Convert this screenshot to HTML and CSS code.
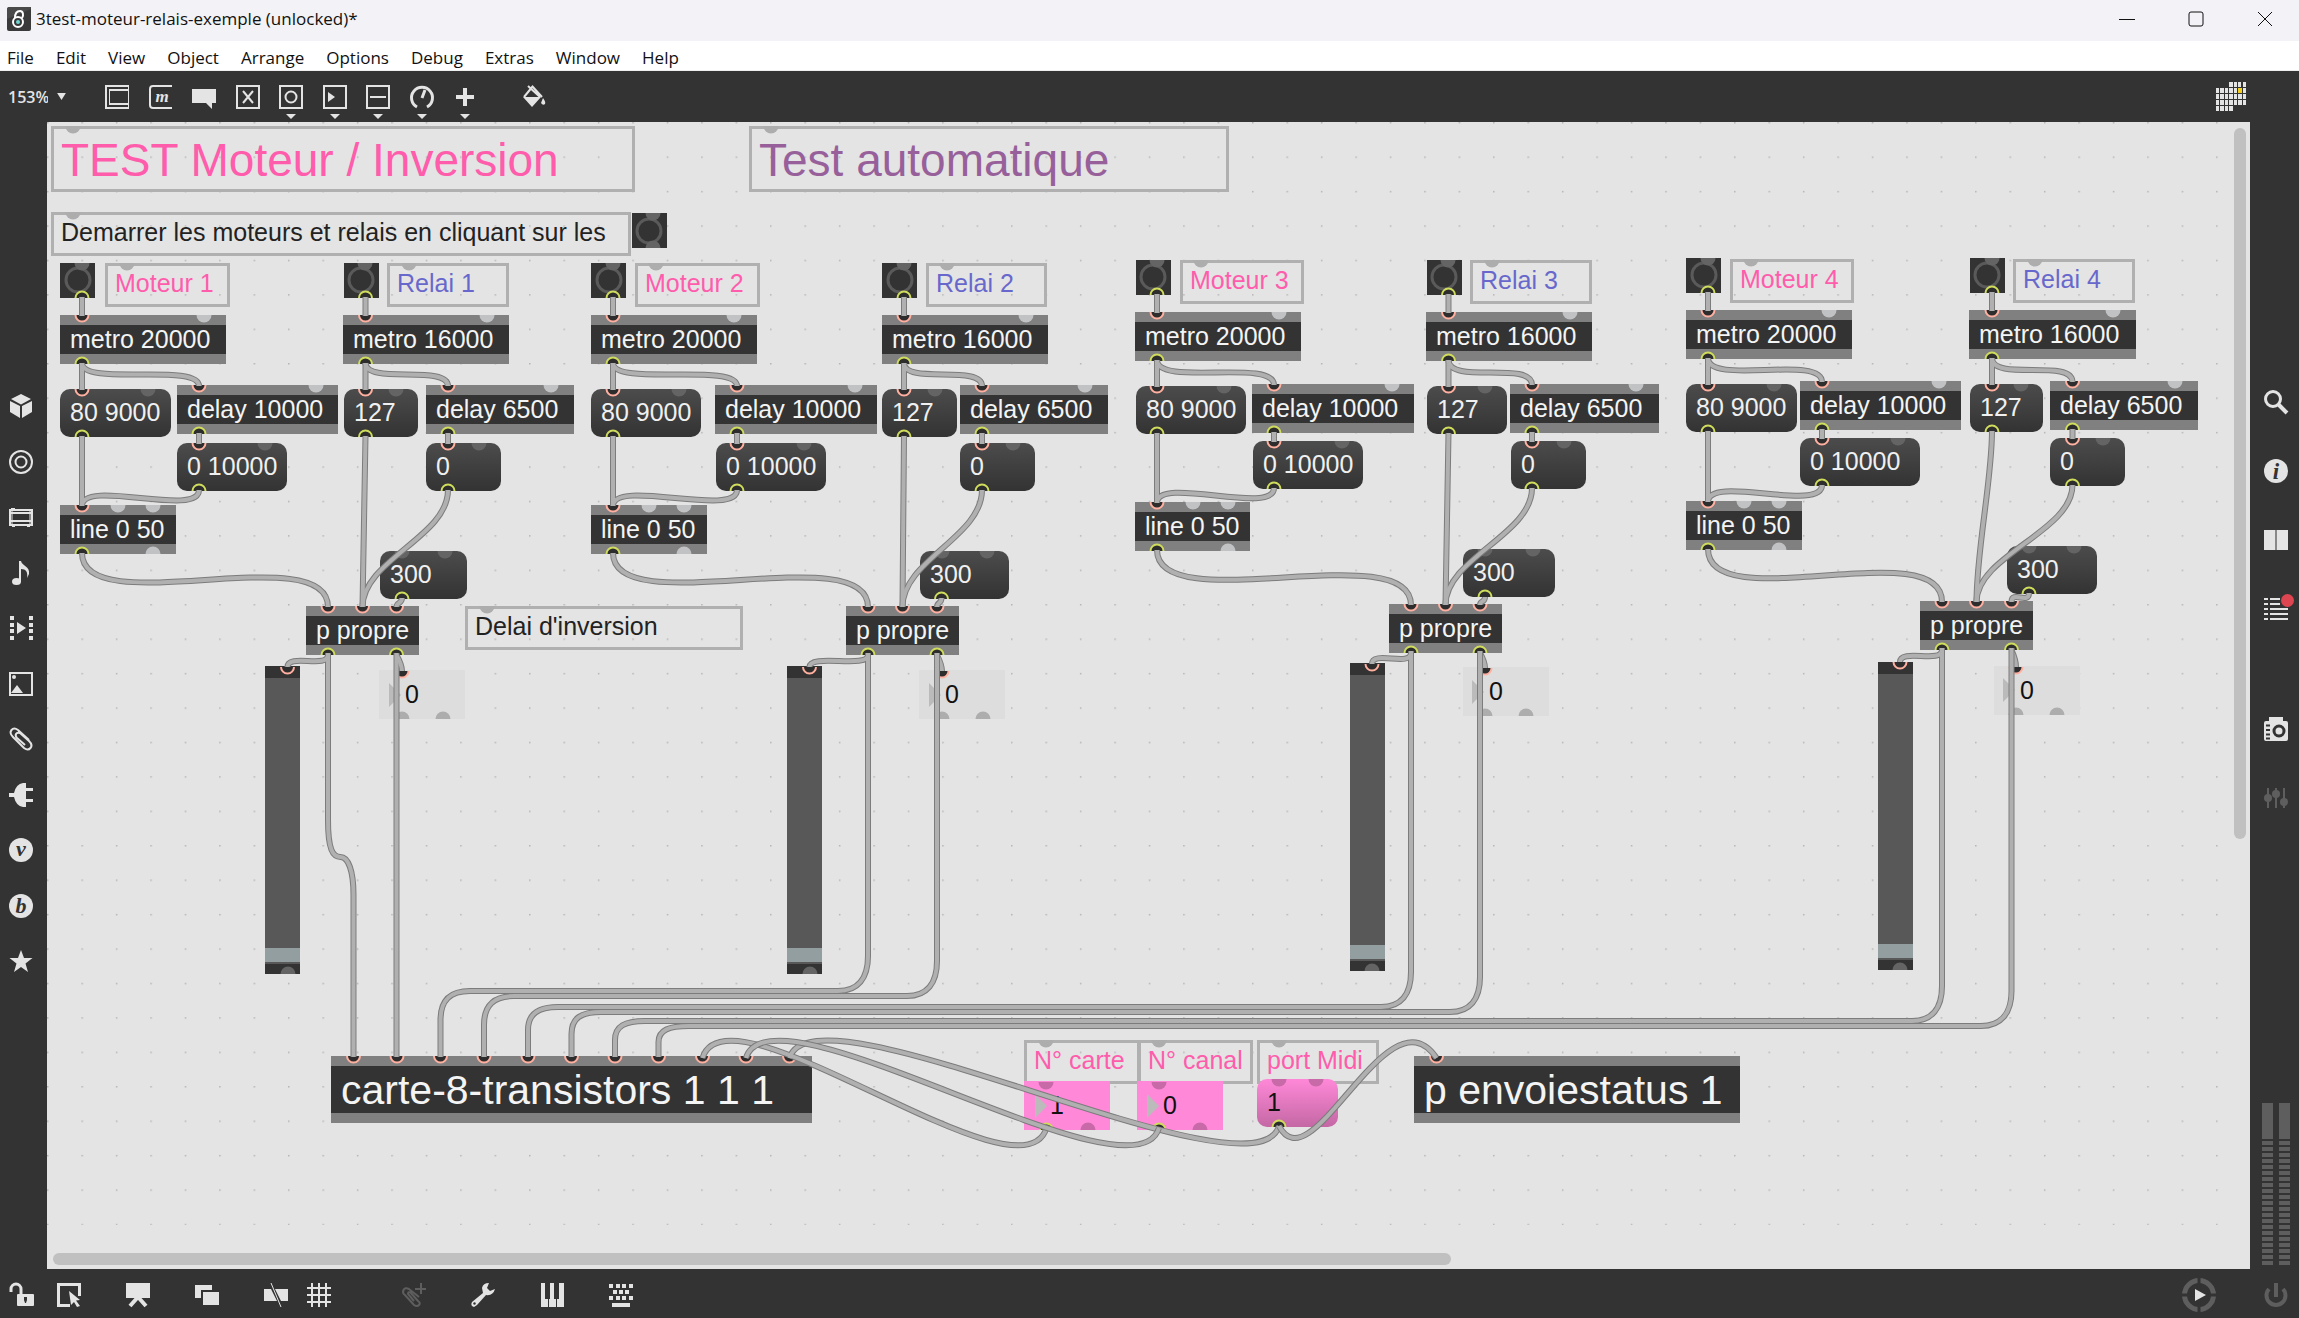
FILE: index.html
```html
<!DOCTYPE html>
<html lang="en">
<head>
<meta charset="utf-8">
<title>3test-moteur-relais-exemple (unlocked)*</title>
<link rel="stylesheet" href="styles.css">
</head>
<body>
<header class="titlebar">
  <svg class="app-icon" viewBox="0 0 24 24"><rect width="24" height="24" rx="2" fill="#3a3a3a"/><path d="M0 12L24 2V0H2L0 2Z" fill="#4a4a4a"/><circle cx="11" cy="15" r="5" fill="none" stroke="#fff" stroke-width="2"/><path d="M8 11C8 6 10 4 13 4S17 8 15 11" fill="none" stroke="#fff" stroke-width="2"/><circle cx="11" cy="15" r="2" fill="#6fd6d0"/></svg>
  <span class="title">3test-moteur-relais-exemple (unlocked)*</span>
  <div class="window-controls">
    <button aria-label="Minimize"><svg viewBox="0 0 16 16"><path d="M0 8.500H16"/></svg></button>
    <button aria-label="Maximize"><svg viewBox="0 0 16 16"><rect x="1" y="1" width="14" height="14" rx="2"/></svg></button>
    <button aria-label="Close"><svg viewBox="0 0 16 16"><path d="M1 1L15 15M15 1L1 15"/></svg></button>
  </div>
</header>
<nav class="menubar">
  <button>File</button><button>Edit</button><button>View</button><button>Object</button><button>Arrange</button><button>Options</button><button>Debug</button><button>Extras</button><button>Window</button><button>Help</button>
</nav>
<div class="toolbar">
  <div class="zoom">
    <select aria-label="Zoom"><option>153%</option></select>
    <svg viewBox="0 0 10 8"><path d="M0 0H10L5 8Z"/></svg>
  </div>
  <div class="tools">
    <button aria-label="Object"><svg class="ico" viewBox="0 0 24 24"><path class="ln" d="M1 0V24M0 1H24M4 5H24M4 19H24M0 23H24"/><path class="ln thin" d="M23.500 0V24M4.500 5V19"/></svg></button>
    <button aria-label="Message"><svg class="ico" viewBox="0 0 24 24"><path class="ln" d="M23 1H4Q1 1 1 4V20Q1 23 4 23H23"/><text class="glyph" x="13" y="17" font-size="17">m</text></svg></button>
    <button aria-label="Comment"><svg class="ico" viewBox="0 0 24 24"><path class="fl" d="M0 4H24V18H20V24L14 18H0Z"/></svg></button>
    <button aria-label="Toggle"><svg class="ico" viewBox="0 0 24 24"><path class="ln" d="M1 1H23V23H1ZM7 6L17 18M17 6L7 18"/></svg></button>
    <button class="drop" aria-label="Button"><svg class="ico" viewBox="0 0 24 24"><path class="ln" d="M1 1H23V23H1Z"/><circle class="ln" cx="12" cy="12" r="5.500"/></svg></button>
    <button class="drop" aria-label="Number"><svg class="ico" viewBox="0 0 24 24"><path class="ln" d="M1 1H23V23H1Z"/><path class="fl" d="M5 7L12 12L5 17Z"/></svg></button>
    <button class="drop" aria-label="Slider"><svg class="ico" viewBox="0 0 24 24"><path class="ln" d="M1 1H23V23H1ZM4 12H20"/></svg></button>
    <button class="drop" aria-label="Dial"><svg class="ico" viewBox="0 0 24 24"><path class="ln thick" d="M7 22A10.500 10.500 0 1 1 17 22M12 13L15 5"/></svg></button>
    <button class="drop" aria-label="Add"><svg class="ico" viewBox="0 0 24 24"><path class="ln fat" d="M12 3V21M3 12H21"/></svg></button>
  </div>
  <button class="format" aria-label="Format"><svg class="ico" viewBox="0 0 24 24"><path class="ln" d="M6 1L18 12M11 1L2 12M10 1L20 12"/><path class="fl" d="M1 12H19L10 22ZM21 13Q24 17 23 19Q21 21 19 18Z"/></svg></button>
  <button class="grid-btn" aria-label="Calendar"><svg viewBox="0 0 30 30"><path class="fl" d="M13 0h4v5h-4zM18 0h3v5h-3zM22 0h3v5h-3zM27 0h3v5h-3zM0 6h3v5h-3zM4 6h4v5h-4zM9 6h3v5h-3zM13 6h4v5h-4zM18 6h3v5h-3zM27 6h3v5h-3zM0 12h3v5h-3zM4 12h4v5h-4zM9 12h3v5h-3zM13 12h4v5h-4zM18 12h3v5h-3zM22 12h4v5h-4zM27 12h3v5h-3zM0 18h3v5h-3zM4 18h4v5h-4zM9 18h3v5h-3zM13 18h4v5h-4zM18 18h3v5h-3zM22 18h4v5h-4zM27 18h3v5h-3zM0 24h3v5h-3zM4 24h4v5h-4zM9 24h3v5h-3zM13 24h4v5h-4z"/><path d="M22 6h4v5h-4z" fill="#f2cf1d"/></svg></button>
</div>
<div class="workspace">
<aside class="rail left">
  <div class="stack">
    <button aria-label="Packages"><svg class="ico" viewBox="0 0 24 24"><path class="fl" d="M12 0L22 5L12 10.500L2 5ZM1 7L11 12V24L1 18ZM23 7L13 12V24L23 18Z"/></svg></button>
    <button aria-label="Target"><svg class="ico" viewBox="0 0 24 24"><circle class="ln" cx="12" cy="12" r="11"/><circle class="ln" cx="12" cy="12" r="5.500"/></svg></button>
    <button aria-label="Devices"><svg class="ico" viewBox="0 0 24 24"><path class="ln" d="M1 5H23V20H1ZM1 8H23M1 16H23"/><path class="ln thin" d="M3 5V20M21 5V20"/><path class="fl" d="M2 3h4v2h-4zM3 20h3v2h-3zM18 20h3v2h-3z"/></svg></button>
    <button aria-label="Audio"><svg class="ico" viewBox="0 0 24 24"><ellipse class="fl" cx="7.500" cy="20.500" rx="4.500" ry="3.500"/><path class="fl" d="M10 0H12C13 5 21 5 20 13L18 17C19 11 17 8 12 8V21H10Z"/></svg></button>
    <button aria-label="Video"><svg class="ico" viewBox="0 0 24 24"><path class="fl" d="M1 0h4v4h-4zM1 7h4v4h-4zM1 13h4v4h-4zM1 20h4v4h-4zM20 0h4v4h-4zM20 7h4v4h-4zM20 13h4v4h-4zM20 20h4v4h-4zM8 6L17 12L8 18Z"/></svg></button>
    <button aria-label="Images"><svg class="ico" viewBox="0 0 24 24"><path class="ln" d="M1 1H23V23H1Z"/><path class="fl" d="M2 21L8 13L14 21Z"/><circle class="fl" cx="5" cy="5" r="2"/></svg></button>
    <button aria-label="Snippets"><svg class="ico" viewBox="0 0 24 24"><path class="ln" d="M20 13L9 3Q5 0 2.500 3T4 10L15 21Q19 24 21.500 21T20 14L11 6Q8 5 7 7T8 11L16 18"/></svg></button>
    <button aria-label="Plug-ins"><svg class="ico" viewBox="0 0 24 24"><path class="fl" d="M0 10H5Q7 1 14 0H17V5H24V8H17V16H24V19H17V24H14Q7 23 5 14H0Z"/></svg></button>
    <button aria-label="Vizzie"><svg class="ico" viewBox="0 0 24 24"><circle class="fl" cx="12" cy="12" r="12"/><text class="glyph dark" x="12" y="18" font-size="22">v</text></svg></button>
    <button aria-label="Beap"><svg class="ico" viewBox="0 0 24 24"><circle class="fl" cx="12" cy="12" r="12"/><text class="glyph dark" x="12" y="19" font-size="22">b</text></svg></button>
    <button aria-label="Favorites"><svg class="ico" viewBox="0 0 24 24"><path class="fl" d="M12 1L15 9H23.500L16.500 14.500L19 23L12 18L5 23L7.500 14.500L.5 9H9Z"/></svg></button>
  </div>
</aside>

<main class="patch">
  <svg class="layer" aria-hidden="true">
    <defs><pattern id="dots" width="34.430" height="34.430" patternUnits="userSpaceOnUse"><rect width="1.500" height="1.500" fill="#b4b4b4"/></pattern></defs>
    <rect width="100%" height="1103" fill="url(#dots)"/>
  </svg>

  <h1 class="node comment big pink" style="--x:51;--y:126;--w:584">TEST Moteur / Inversion</h1>
  <h2 class="node comment big purple" style="--x:749;--y:126;--w:480">Test automatique</h2>
  <p class="node comment" style="--x:51;--y:212;--w:580">Demarrer les moteurs et relais en cliquant sur les</p>
  <button class="node bang" aria-label="bang" style="--x:632;--y:213"></button>

  <button class="node bang" aria-label="bang" style="--x:60;--y:263"></button>
  <p class="node comment pink" style="--x:105;--y:263;--w:125">Moteur 1</p>
  <div class="node object" style="--x:60;--y:315;--w:166">metro 20000</div>
  <button class="node message" style="--x:60;--y:389;--w:111">80 9000</button>
  <div class="node object" style="--x:177;--y:385;--w:161">delay 10000</div>
  <button class="node message" style="--x:177;--y:443;--w:110">0 10000</button>
  <div class="node object" style="--x:60;--y:505;--w:116">line 0 50</div>
  <button class="node bang" aria-label="bang" style="--x:344;--y:263"></button>
  <p class="node comment blue" style="--x:387;--y:263;--w:122">Relai 1</p>
  <div class="node object" style="--x:343;--y:315;--w:166">metro 16000</div>
  <button class="node message" style="--x:344;--y:389;--w:74">127</button>
  <div class="node object" style="--x:426;--y:385;--w:148">delay 6500</div>
  <button class="node message" style="--x:426;--y:443;--w:75">0</button>
  <button class="node message" style="--x:380;--y:551;--w:87">300</button>
  <div class="node object" style="--x:306;--y:606;--w:113">p propre</div>
  <p class="node comment" style="--x:465;--y:606;--w:278">Delai d'inversion</p>
  <input class="node slider" type="range" value="0" aria-label="Moteur 1" style="--x:265;--y:666">
  <input class="node number" type="text" value="0" aria-label="Relai 1" style="--x:379;--y:670">

  <button class="node bang" aria-label="bang" style="--x:591;--y:263"></button>
  <p class="node comment pink" style="--x:635;--y:263;--w:125">Moteur 2</p>
  <div class="node object" style="--x:591;--y:315;--w:166">metro 20000</div>
  <button class="node message" style="--x:591;--y:389;--w:110">80 9000</button>
  <div class="node object" style="--x:715;--y:385;--w:162">delay 10000</div>
  <button class="node message" style="--x:716;--y:443;--w:110">0 10000</button>
  <div class="node object" style="--x:591;--y:505;--w:116">line 0 50</div>
  <button class="node bang" aria-label="bang" style="--x:882;--y:263"></button>
  <p class="node comment blue" style="--x:926;--y:263;--w:121">Relai 2</p>
  <div class="node object" style="--x:882;--y:315;--w:166">metro 16000</div>
  <button class="node message" style="--x:882;--y:389;--w:75">127</button>
  <div class="node object" style="--x:960;--y:385;--w:148">delay 6500</div>
  <button class="node message" style="--x:960;--y:443;--w:75">0</button>
  <button class="node message" style="--x:920;--y:551;--w:89">300</button>
  <div class="node object" style="--x:846;--y:606;--w:113">p propre</div>
  <input class="node slider" type="range" value="0" aria-label="Moteur 2" style="--x:787;--y:666">
  <input class="node number" type="text" value="0" aria-label="Relai 2" style="--x:919;--y:670">

  <button class="node bang" aria-label="bang" style="--x:1136;--y:260"></button>
  <p class="node comment pink" style="--x:1180;--y:260;--w:124">Moteur 3</p>
  <div class="node object" style="--x:1135;--y:312;--w:166">metro 20000</div>
  <button class="node message" style="--x:1136;--y:386;--w:110">80 9000</button>
  <div class="node object" style="--x:1252;--y:384;--w:162">delay 10000</div>
  <button class="node message" style="--x:1253;--y:441;--w:110">0 10000</button>
  <div class="node object" style="--x:1135;--y:502;--w:115">line 0 50</div>
  <button class="node bang" aria-label="bang" style="--x:1427;--y:260"></button>
  <p class="node comment blue" style="--x:1470;--y:260;--w:122">Relai 3</p>
  <div class="node object" style="--x:1426;--y:312;--w:166">metro 16000</div>
  <button class="node message" style="--x:1427;--y:386;--w:80">127</button>
  <div class="node object" style="--x:1510;--y:384;--w:149">delay 6500</div>
  <button class="node message" style="--x:1511;--y:441;--w:75">0</button>
  <button class="node message" style="--x:1463;--y:549;--w:92">300</button>
  <div class="node object" style="--x:1389;--y:604;--w:113">p propre</div>
  <input class="node slider" type="range" value="0" aria-label="Moteur 3" style="--x:1350;--y:663">
  <input class="node number" type="text" value="0" aria-label="Relai 3" style="--x:1463;--y:667">

  <button class="node bang" aria-label="bang" style="--x:1686;--y:258"></button>
  <p class="node comment pink" style="--x:1730;--y:259;--w:124">Moteur 4</p>
  <div class="node object" style="--x:1686;--y:310;--w:166">metro 20000</div>
  <button class="node message" style="--x:1686;--y:384;--w:111">80 9000</button>
  <div class="node object" style="--x:1800;--y:381;--w:161">delay 10000</div>
  <button class="node message" style="--x:1800;--y:438;--w:120">0 10000</button>
  <div class="node object" style="--x:1686;--y:501;--w:116">line 0 50</div>
  <button class="node bang" aria-label="bang" style="--x:1970;--y:258"></button>
  <p class="node comment blue" style="--x:2013;--y:259;--w:122">Relai 4</p>
  <div class="node object" style="--x:1969;--y:310;--w:167">metro 16000</div>
  <button class="node message" style="--x:1970;--y:384;--w:73">127</button>
  <div class="node object" style="--x:2050;--y:381;--w:148">delay 6500</div>
  <button class="node message" style="--x:2050;--y:438;--w:75">0</button>
  <button class="node message" style="--x:2007;--y:546;--w:90">300</button>
  <div class="node object" style="--x:1920;--y:601;--w:113">p propre</div>
  <input class="node slider" type="range" value="0" aria-label="Moteur 4" style="--x:1878;--y:662">
  <input class="node number" type="text" value="0" aria-label="Relai 4" style="--x:1994;--y:666">

  <div class="node object large" style="--x:331;--y:1056;--w:481">carte-8-transistors 1 1 1</div>
  <div class="node object large" style="--x:1414;--y:1056;--w:326">p envoiestatus 1</div>
  <label class="node comment pink" for="carte" style="--x:1024;--y:1040;--w:116">N° carte</label>
  <label class="node comment pink" for="canal" style="--x:1138;--y:1040;--w:115">N° canal</label>
  <p class="node comment pink" style="--x:1257;--y:1040;--w:122">port Midi</p>
  <input class="node number rose" id="carte" type="text" value="1" style="--x:1024;--y:1081">
  <input class="node number rose" id="canal" type="text" value="0" style="--x:1137;--y:1081">
  <button class="node message rose" style="--x:1257;--y:1079;--w:81">1</button>

  <svg class="layer" aria-hidden="true">
    <defs>
      <path id="in" class="inlet" d="M-6.500 0A6.500 6.500 0 0 0 6.500 0"/>
      <path id="out" class="outlet" d="M-6.500 0A6.500 6.500 0 0 1 6.500 0"/>
      <path id="ci" d="M-7.500 0A7.500 7.500 0 0 0 7.500 0Z"/>
      <path id="co" d="M-7.500 0A7.500 7.500 0 0 1 7.500 0Z"/>
      <path id="tri" d="M0 0L12 12L0 24Z"/>
      <g id="cords-a">
        <path d="M82 297V316M82 363V390M82 436V506M365.500 297V316M365.500 363V390M365.500 436L362.500 607M199 433V444M448 433V444"/>
        <path d="M82 363C82 387 199 362 199 386M199 490C199 518 82 478 82 506M82 553C82 623 328 537 328 607M365.500 363C365.500 385 448 364 448 386M448 490C448 537 362.500 560 362.500 607M402 598C402 604 396.500 602 396.500 607M328 655C328 669 287.500 653 287.500 667M396.500 655Q402 665 402 671"/>
        <path d="M328 653V820C328 850 333 857 340.500 857S353.500 870 353.500 895V1057M396.500 653V1057"/>
        <path d="M613 297V316M613 363V390M613 436V506M904 297V316M904 363V390M904 436L902.500 607M737 433V444M982 433V444"/>
        <path d="M613 363C613 387 737 362 737 386M737 490C737 518 613 478 613 506M613 553C613 623 868 537 868 607M904 363C904 385 982 364 982 386M982 490C982 537 902.500 560 902.500 607M941.500 598C941.500 604 937 602 937 607M868 655C868 669 809.500 653 809.500 667M937 655Q942 665 942 671"/>
        <path d="M1157 294V313M1157 360V387M1157 433V503M1448.500 294V313M1448.500 360V387M1448.500 433L1445.500 605M1274 432V442M1532 432V442"/>
        <path d="M1157 360C1157 387 1274 358 1274 385M1274 488C1274 516 1157 475 1157 503M1157 550C1157 620 1411 535 1411 605M1448.500 360C1448.500 385 1532 360 1532 385M1532 488C1532 535 1445.500 558 1445.500 605M1485 597C1485 603 1480 600 1480 605M1411 653C1411 667 1372 650 1372 664M1480 653Q1485 662 1485 668"/>
        <path d="M1708 292V311M1708 358V385M1708 431V502M1992 292V311M1992 358V385M1992 431C1992 480 1976.500 550 1976.500 602M1822 429V439M2072.500 429V439"/>
        <path d="M1708 358C1708 386 1822 354 1822 382M1822 485C1822 513 1708 474 1708 502M1708 549C1708 619 1942 532 1942 602M1992 358C1992 382 2072.500 358 2072.500 382M2072.500 485C2072.500 532 1976.500 555 1976.500 602M2029 593C2029 605 2011.500 590 2011.500 602M1942 650C1942 664 1900 648 1900 662M2011.500 650Q2016 660 2016 667"/>
        <path d="M868 653V956C868 978 858 991 838 991H470C450 991 440.500 1000 440.500 1020V1057"/>
        <path d="M1411 651V972C1411 994 1401 1007 1381 1007H558C538 1007 528 1014 528 1030V1057"/>
        <path d="M1942 648V986C1942 1008 1932 1021 1912 1021H645C625 1021 615 1026 615 1040V1057"/>
        <path d="M1046.500 1128C1022 1209 727 977 702.500 1058M1279 1126C1255 1207 814 977 789.500 1058"/>
      </g>
      <g id="cords-b">
        <path d="M937 653V961C937 983 927 996 907 996H514C494 996 484 1005 484 1025V1057"/>
        <path d="M1480 651V977C1480 999 1470 1012 1450 1012H601C581 1012 571.500 1018 571.500 1034V1057"/>
        <path d="M2011.500 648V991C2011.500 1013 2001 1026 1981 1026H689C669 1026 658.500 1030 658.500 1042V1057"/>
        <path d="M1159 1128C1135 1209 770 977 746 1058M1279 1126C1312 1188 1388 986 1436.500 1058"/>
      </g>
    </defs>
    <g transform="translate(-47 -122)">
      <g class="rings"><circle cx="649" cy="231" r="12"/><circle cx="78" cy="280" r="12"/><circle cx="361" cy="280" r="12"/><circle cx="609" cy="280" r="12"/><circle cx="900" cy="280" r="12"/><circle cx="1153" cy="277" r="12"/><circle cx="1444" cy="277" r="12"/><circle cx="1704" cy="275" r="12"/><circle cx="1987" cy="275" r="12"/></g>
      <g class="tris">
        <use href="#tri" x="389" y="683"/><use href="#tri" x="929" y="683"/><use href="#tri" x="1472" y="680"/><use href="#tri" x="2003" y="678"/><use href="#tri" x="1035" y="1094"/><use href="#tri" x="1147" y="1094"/>
      </g>
      <g class="cold-comment">
        <use href="#ci" x="73" y="126"/><use href="#ci" x="771" y="126"/><use href="#ci" x="73" y="212"/><use href="#ci" x="127" y="263"/><use href="#ci" x="409" y="263"/><use href="#ci" x="656" y="263"/><use href="#ci" x="947" y="263"/><use href="#ci" x="1201" y="260"/><use href="#ci" x="1492" y="260"/><use href="#ci" x="1751" y="259"/><use href="#ci" x="2035" y="259"/><use href="#ci" x="487" y="606"/><use href="#ci" x="1046" y="1040"/><use href="#ci" x="1159" y="1040"/><use href="#ci" x="1279" y="1040"/>
        <use href="#co" x="402" y="719"/><use href="#co" x="443" y="719"/><use href="#co" x="942" y="719"/><use href="#co" x="983" y="719"/><use href="#co" x="1485" y="716"/><use href="#co" x="1526" y="716"/><use href="#co" x="2016" y="715"/><use href="#co" x="2057" y="715"/>
      </g>
      <g class="cold-object">
        <use href="#ci" x="204" y="315"/><use href="#ci" x="316" y="385"/><use href="#ci" x="118" y="505"/><use href="#ci" x="153" y="505"/><use href="#co" x="153" y="554"/><use href="#ci" x="487" y="315"/><use href="#ci" x="551" y="385"/>
        <use href="#ci" x="734" y="315"/><use href="#ci" x="855" y="385"/><use href="#ci" x="649" y="505"/><use href="#ci" x="684" y="505"/><use href="#co" x="684" y="554"/><use href="#ci" x="1026" y="315"/><use href="#ci" x="1085" y="385"/>
        <use href="#ci" x="1279" y="312"/><use href="#ci" x="1392" y="384"/><use href="#ci" x="1193" y="502"/><use href="#ci" x="1228" y="502"/><use href="#co" x="1228" y="551"/><use href="#ci" x="1570" y="312"/><use href="#ci" x="1636" y="384"/>
        <use href="#ci" x="1829" y="310"/><use href="#ci" x="1939" y="381"/><use href="#ci" x="1744" y="501"/><use href="#ci" x="1779" y="501"/><use href="#co" x="1779" y="550"/><use href="#ci" x="2113" y="310"/><use href="#ci" x="2175" y="381"/>
      </g>
      <g class="cold-dark">
        <use href="#ci" x="653" y="213"/><use href="#co" x="653" y="248"/>
        <use href="#ci" x="82" y="263"/><use href="#ci" x="365" y="263"/><use href="#ci" x="613" y="263"/><use href="#ci" x="904" y="263"/><use href="#ci" x="1157" y="260"/><use href="#ci" x="1448" y="260"/><use href="#ci" x="1708" y="258"/><use href="#ci" x="1992" y="258"/>
        <use href="#ci" x="148" y="389"/><use href="#ci" x="265" y="443"/><use href="#ci" x="396" y="389"/><use href="#ci" x="479" y="443"/><use href="#ci" x="402" y="551"/><use href="#ci" x="445" y="551"/>
        <use href="#ci" x="679" y="389"/><use href="#ci" x="804" y="443"/><use href="#ci" x="935" y="389"/><use href="#ci" x="1013" y="443"/><use href="#ci" x="942" y="551"/><use href="#ci" x="987" y="551"/>
        <use href="#ci" x="1224" y="386"/><use href="#ci" x="1342" y="441"/><use href="#ci" x="1485" y="386"/><use href="#ci" x="1564" y="441"/><use href="#ci" x="1485" y="549"/><use href="#ci" x="1533" y="549"/>
        <use href="#ci" x="1774" y="384"/><use href="#ci" x="1898" y="438"/><use href="#ci" x="2021" y="384"/><use href="#ci" x="2103" y="438"/><use href="#ci" x="2029" y="546"/><use href="#ci" x="2074" y="546"/>
        <use href="#co" x="288" y="974"/><use href="#co" x="810" y="974"/><use href="#co" x="1372" y="971"/><use href="#co" x="1900" y="970"/>
      </g>
      <g class="cold-rose">
        <use href="#ci" x="1046" y="1082"/><use href="#ci" x="1159" y="1082"/><use href="#ci" x="1279" y="1079"/><use href="#ci" x="1316" y="1079"/><use href="#co" x="1088" y="1130"/><use href="#co" x="1200" y="1130"/>
      </g>
      <g>
        <use href="#in" x="82" y="315"/><use href="#in" x="82" y="389"/><use href="#in" x="82" y="505"/><use href="#in" x="199" y="385"/><use href="#in" x="199" y="443"/><use href="#in" x="365.500" y="315"/><use href="#in" x="365.500" y="389"/><use href="#in" x="448" y="385"/><use href="#in" x="448" y="443"/><use href="#in" x="328" y="606"/><use href="#in" x="362.500" y="606"/><use href="#in" x="396.500" y="606"/><use href="#in" x="287.500" y="667"/><use href="#in" x="402" y="671"/>
        <use href="#in" x="613" y="315"/><use href="#in" x="613" y="389"/><use href="#in" x="613" y="505"/><use href="#in" x="737" y="385"/><use href="#in" x="737" y="443"/><use href="#in" x="904" y="315"/><use href="#in" x="904" y="389"/><use href="#in" x="982" y="385"/><use href="#in" x="982" y="443"/><use href="#in" x="868" y="606"/><use href="#in" x="902.500" y="606"/><use href="#in" x="937" y="606"/><use href="#in" x="809.500" y="667"/><use href="#in" x="942" y="671"/>
        <use href="#in" x="1157" y="312"/><use href="#in" x="1157" y="386"/><use href="#in" x="1157" y="502"/><use href="#in" x="1274" y="384"/><use href="#in" x="1274" y="441"/><use href="#in" x="1448.500" y="312"/><use href="#in" x="1448.500" y="386"/><use href="#in" x="1532" y="384"/><use href="#in" x="1532" y="441"/><use href="#in" x="1411" y="604"/><use href="#in" x="1445.500" y="604"/><use href="#in" x="1480" y="604"/><use href="#in" x="1372" y="664"/><use href="#in" x="1485" y="668"/>
        <use href="#in" x="1708" y="310"/><use href="#in" x="1708" y="384"/><use href="#in" x="1708" y="501"/><use href="#in" x="1822" y="381"/><use href="#in" x="1822" y="438"/><use href="#in" x="1992" y="310"/><use href="#in" x="1992" y="384"/><use href="#in" x="2072.500" y="381"/><use href="#in" x="2072.500" y="438"/><use href="#in" x="1942" y="601"/><use href="#in" x="1976.500" y="601"/><use href="#in" x="2011.500" y="601"/><use href="#in" x="1900" y="662"/><use href="#in" x="2016" y="667"/>
        <use href="#in" x="353.500" y="1056"/><use href="#in" x="397" y="1056"/><use href="#in" x="440.500" y="1056"/><use href="#in" x="484" y="1056"/><use href="#in" x="528" y="1056"/><use href="#in" x="571.500" y="1056"/><use href="#in" x="615" y="1056"/><use href="#in" x="658.500" y="1056"/><use href="#in" x="702.500" y="1056"/><use href="#in" x="746" y="1056"/><use href="#in" x="789.500" y="1056"/><use href="#in" x="1436.500" y="1056"/>
        <use href="#out" x="82" y="298"/><use href="#out" x="82" y="364"/><use href="#out" x="82" y="437"/><use href="#out" x="82" y="554"/><use href="#out" x="199" y="434"/><use href="#out" x="199" y="491"/><use href="#out" x="365.500" y="298"/><use href="#out" x="365.500" y="364"/><use href="#out" x="365.500" y="437"/><use href="#out" x="448" y="434"/><use href="#out" x="448" y="491"/><use href="#out" x="402" y="599"/><use href="#out" x="328" y="655"/><use href="#out" x="396.500" y="655"/>
        <use href="#out" x="613" y="298"/><use href="#out" x="613" y="364"/><use href="#out" x="613" y="437"/><use href="#out" x="613" y="554"/><use href="#out" x="737" y="434"/><use href="#out" x="737" y="491"/><use href="#out" x="904" y="298"/><use href="#out" x="904" y="364"/><use href="#out" x="904" y="437"/><use href="#out" x="982" y="434"/><use href="#out" x="982" y="491"/><use href="#out" x="941.500" y="599"/><use href="#out" x="868" y="655"/><use href="#out" x="937" y="655"/>
        <use href="#out" x="1157" y="295"/><use href="#out" x="1157" y="361"/><use href="#out" x="1157" y="434"/><use href="#out" x="1157" y="551"/><use href="#out" x="1274" y="433"/><use href="#out" x="1274" y="489"/><use href="#out" x="1448.500" y="295"/><use href="#out" x="1448.500" y="361"/><use href="#out" x="1448.500" y="434"/><use href="#out" x="1532" y="433"/><use href="#out" x="1532" y="489"/><use href="#out" x="1485" y="597"/><use href="#out" x="1411" y="653"/><use href="#out" x="1480" y="653"/>
        <use href="#out" x="1708" y="293"/><use href="#out" x="1708" y="359"/><use href="#out" x="1708" y="432"/><use href="#out" x="1708" y="550"/><use href="#out" x="1822" y="430"/><use href="#out" x="1822" y="486"/><use href="#out" x="1992" y="293"/><use href="#out" x="1992" y="359"/><use href="#out" x="1992" y="432"/><use href="#out" x="2072.500" y="430"/><use href="#out" x="2072.500" y="486"/><use href="#out" x="2029" y="594"/><use href="#out" x="1942" y="650"/><use href="#out" x="2011.500" y="650"/>
        <use href="#out" x="1046.500" y="1130"/><use href="#out" x="1159" y="1130"/><use href="#out" x="1279" y="1127"/>
      </g>
      <use href="#cords-a" class="cord edge"/><use href="#cords-a" class="cord core"/>
      <use href="#cords-b" class="cord edge"/><use href="#cords-b" class="cord core"/>
    </g>
  </svg>
  <div class="scroll vertical"></div>
  <div class="scroll horizontal"></div>
</main>

<aside class="rail right">
  <div class="group">
    <button aria-label="Search"><svg class="ico" viewBox="0 0 24 24"><circle class="ln thick" cx="9" cy="9" r="7.500"/><path class="ln fat" d="M14 14L23 23"/></svg></button>
    <button aria-label="Inspector"><svg class="ico" viewBox="0 0 24 24"><circle class="fl" cx="12" cy="12" r="12"/><text class="glyph dark" x="12" y="20" font-size="23">i</text></svg></button>
    <button aria-label="Reference"><svg class="ico" viewBox="0 0 24 24"><path class="fl" d="M0 2H11V22H0ZM13 2H24V22H13Z"/><path d="M11 2H13V22H11Z" fill="#888"/></svg></button>
    <button class="console" aria-label="Console"><svg class="ico" viewBox="0 0 24 24"><path class="ln" d="M0 2H4M6 2H16M0 7H4M6 7H16M0 12H4M6 12H24M0 17H4M6 17H24M0 22H4M6 22H24"/></svg></button>
  </div>
  <div class="group">
    <button aria-label="Snapshots"><svg class="ico" viewBox="0 0 24 24"><path class="fl" d="M5 0H19V4H22Q24 4 24 6V22Q24 24 22 24H2Q0 24 0 22V6Q0 4 2 4H5Z"/><circle cx="15" cy="14" r="5" fill="none" stroke="#333" stroke-width="3"/><path d="M2 8.500H6M2 13H6M2 17.500H6M2 21.500H6" stroke="#333" stroke-width="2"/></svg></button>
    <button class="off" aria-label="Mixer"><svg class="ico" viewBox="0 0 24 24"><path class="ln" d="M4 2V22M12 2V22M20 2V22"/><circle class="fl" cx="4" cy="12" r="4"/><circle class="fl" cx="12" cy="8" r="4"/><circle class="fl" cx="20" cy="16" r="4"/></svg></button>
  </div>
  <div class="meters"><span class="meter"></span><span class="meter"></span></div>
</aside>
</div>
<footer class="bottombar">
  <div class="pair">
    <button aria-label="Unlock"><svg class="ico" viewBox="0 0 24 24"><path class="ln thick" d="M1 9V6A5 5 0 0 1 11 6V12"/><rect class="fl" x="7" y="11" width="17" height="12" rx="1"/><path d="M14 14h3v3l-1 3h-1l-1-3z" fill="#333"/></svg></button>
    <button aria-label="Select"><svg class="ico" viewBox="0 0 24 24"><path class="ln thick" d="M22.500 13V1.500H1.500V22.500H13"/><path class="fl" d="M12 8L23 17L19 17.500L23 23L20 24L17 19L14 22Z"/></svg></button>
  </div>
  <button aria-label="Presentation"><svg class="ico" viewBox="0 0 24 24"><path class="fl" d="M0 0H24V15H0Z"/><path class="ln fat" d="M12 14L4 23M12 14L20 23"/></svg></button>
  <button aria-label="Layers"><svg class="ico" viewBox="0 0 24 24"><path class="fl" d="M0 2H17V7H6V15H0ZM8 9H24V22H8Z"/></svg></button>
  <div class="pair narrow">
    <button aria-label="Mute"><svg class="ico" viewBox="0 0 24 24"><path class="fl" d="M0 6H7L13 18H0ZM11 6H24V18H17Z"/><path class="ln thin" d="M7 0L17 24"/></svg></button>
    <button aria-label="Grid"><svg class="ico" viewBox="0 0 24 24"><path class="ln" d="M5 0V24M12 0V24M19 0V24M0 5H24M0 12H24M0 19H24"/></svg></button>
  </div>
  <button class="off spaced" aria-label="Add snippet"><svg class="ico" viewBox="0 0 24 24"><path class="ln" d="M17 14L7 6Q3 4 1.500 7T3 12L12 22Q15 24 17 22T16 18L8 9Q6 9 6 11L12 18M19 0V11M13 6H24"/></svg></button>
  <button aria-label="Tools"><svg class="ico" viewBox="0 0 24 24"><path class="fl" d="M18 0Q12 0 11 5L12 10L1 19Q-1 23 3 24L6 22L15 12Q22 13 24 6L19 8L16 5Z"/><circle cx="3.500" cy="20.500" r="1.200" fill="#333"/></svg></button>
  <button aria-label="MIDI"><svg class="ico" viewBox="0 0 24 24"><path class="fl" d="M1 0H5V16H8V24H1ZM10 0H14V16H16V24H9V16H10ZM19 0H24V24H17V16H19Z"/></svg></button>
  <button aria-label="Keyboard"><svg class="ico" viewBox="0 0 24 24"><path class="fl" d="M0 1h4v4h-4zM7 1h4v4h-4zM13 1h4v4h-4zM20 1h4v4h-4zM4 7h4v4h-4zM10 7h4v4h-4zM16 7h4v4h-4zM0 13h4v4h-4zM7 13h4v4h-4zM13 13h4v4h-4zM20 13h4v4h-4zM3 20h18v4h-18z"/></svg></button>
  <button class="transport" aria-label="Play"><svg viewBox="0 0 34 34"><circle cx="17" cy="17" r="14.500" fill="none" stroke="#5e5e5e" stroke-width="5"/><path d="M17 0V34M0 17H34" stroke="#333" stroke-width="3"/><path class="fl" d="M13 11L24 17L13 23Z"/></svg></button>
  <button class="off power" aria-label="Audio power"><svg class="ico" viewBox="0 0 24 24"><path class="ln fat" d="M12 0V14M5 6A9.500 9.500 0 1 0 19 6"/></svg></button>
</footer>
</body>
</html>
```
FILE: styles.css
```css
* { box-sizing: border-box; }
body {
  margin: 0;
  min-height: 100vh;
  display: flex;
  flex-direction: column;
  background: #333;
  color: #e4e4e4;
  font: 17px/24px "Open Sans", "Noto Sans", sans-serif;
}
button, select, input {
  appearance: none;
  margin: 0;
  padding: 0;
  border: 0;
  background: none;
  color: inherit;
  font: inherit;
}
button { display: block; }
svg { display: block; }

/* window chrome */
.titlebar {
  display: flex;
  align-items: center;
  height: 41px;
  padding-left: 7px;
  padding-bottom: 4px;
  gap: 5px;
  background: #f3f2f6;
  color: #111;
}
.app-icon { width: 24px; height: 24px; }
.window-controls { display: flex; margin-left: auto; }
.window-controls button { width: 69px; display: grid; place-items: center; }
.window-controls svg { width: 16px; height: 16px; fill: none; stroke: #111; stroke-width: 1; }
.menubar {
  display: flex;
  gap: 22px;
  height: 30px;
  padding: 4px 7px 0;
  background: #fff;
  border-bottom: 1px solid #eee;
  color: #111;
}

.ico { width: 24px; height: 24px; overflow: visible; }
.ln { fill: none; stroke: #e4e4e4; stroke-width: 2; }
.thin { stroke-width: 1; }
.thick { stroke-width: 3; }
.fat { stroke-width: 4; }
.fl { fill: #e4e4e4; }
.glyph { fill: #e4e4e4; font-family: "Liberation Serif", serif; font-style: italic; font-weight: bold; text-anchor: middle; }
.glyph.dark { fill: #333; }
.off .ln { stroke: #5e5e5e; }
.off .fl { fill: #5e5e5e; }

.toolbar {
  display: flex;
  align-items: center;
  height: 51px;
  padding: 0 53px 0 8px;
}
.zoom { display: flex; align-items: center; width: 97px; gap: 9px; font-size: 16px; font-weight: 600; }
.zoom select { width: 40px; }
.zoom svg { width: 9px; height: 7px; fill: #e4e4e4; }
.tools { display: flex; justify-content: space-between; width: 372px; }
.drop { position: relative; }
.drop::after {
  content: "";
  position: absolute;
  left: 7px;
  top: 29px;
  border: 5px solid transparent;
  border-top-color: #e4e4e4;
  border-bottom: 0;
}
.format { margin-left: 45px; }
.grid-btn { margin-left: auto; }
.grid-btn svg { width: 30px; height: 30px; }

.workspace { flex: 1; display: flex; }
.rail.left { width: 47px; padding: 272px 0 0 9px; }
.stack { display: flex; flex-direction: column; justify-content: space-between; height: 579px; }
.rail.right { width: 49px; padding-top: 268px; display: flex; flex-direction: column; align-items: center; gap: 96px; }
.group { display: flex; flex-direction: column; gap: 45px; padding-left: 3px; }
.console { position: relative; }
.console::after {
  content: "";
  position: absolute;
  left: 17px;
  top: -3px;
  width: 13px;
  height: 13px;
  border-radius: 50%;
  background: #dd4550;
}
.meters { display: flex; gap: 6px; margin-top: auto; padding: 0 0 4px 2px; }
.meter {
  width: 11px;
  height: 162px;
  background:
    linear-gradient(#5e5e5e, #5e5e5e) top / 100% 36px no-repeat,
    repeating-linear-gradient(#333 0 2px, #5e5e5e 2px 6px);
}

/* patcher canvas: nodes are placed in document coordinates */
.patch {
  --scroll-x: 47px;
  --scroll-y: 122px;
  position: relative;
  flex: 1;
  overflow: hidden;
  background: #e4e4e4;
  color: #222;
  font: 25px/30px "Liberation Sans", Arial, sans-serif;
}
.layer { position: absolute; inset: 0; width: 100%; height: 100%; pointer-events: none; }
.node {
  position: absolute;
  left: calc(var(--x) * 1px - var(--scroll-x));
  top: calc(var(--y) * 1px - var(--scroll-y));
  width: calc(var(--w) * 1px);
  margin: 0;
  font-weight: normal;
  white-space: nowrap;
  text-align: left;
}
.comment { height: 44px; padding: 2px 7px; border: 3px solid #b0b0b0; }
.comment.big { height: 66px; padding: 5px 7px; font-size: 46px; line-height: 52px; }
.pink { color: #ff5cac; }
.purple { color: #98609a; }
.blue { color: #6868cc; }
.object {
  height: 49px;
  padding: 0 10px;
  border: solid #808080;
  border-width: 10px 0;
  line-height: 28px;
  background: #333;
  color: #f4f4f4;
}
.object.large { height: 67px; font-size: 41px; line-height: 48px; }
.message {
  height: 48px;
  padding: 0 10px 2px;
  border-radius: 10px;
  background: linear-gradient(#4c4c4c, #333);
  color: #f0f0f0;
}
.message.rose { background: linear-gradient(#ff88d8, #c468a4); color: #111; }
.bang { width: 35px; height: 35px; background: #333; }
.number { width: 86px; height: 49px; padding: 0 0 0 26px; background: #ddd; color: #111; }
.number.rose { background: #ff88d8; }
.slider {
  width: 35px;
  height: 308px;
  padding-bottom: 2px;
  border: solid #333;
  border-width: 12px 0 10px;
  background: #585858;
  writing-mode: vertical-lr;
  direction: rtl;
}
.slider::-webkit-slider-runnable-track { width: 35px; }
.slider::-webkit-slider-thumb { appearance: none; width: 35px; height: 14px; background: #929ea0; }

.inlet { fill: #2d2d2d; stroke: #ffb0a0; stroke-width: 2; }
.outlet { fill: #2d2d2d; stroke: #d0dc5c; stroke-width: 2; }
.rings { fill: none; stroke: #5a5a5a; stroke-width: 3; }
.tris { fill: #bbb; }
.cold-comment { fill: #adadad; }
.cold-object { fill: #c0c2c4; }
.cold-dark { fill: #646464; }
.cold-rose { fill: #c86aa8; }
.cord { fill: none; }
.edge { stroke: #7c7c7c; stroke-width: 6; }
.core { stroke: #b0b0b0; stroke-width: 4; }

.scroll { position: absolute; border-radius: 6px; background: #c0c0c0; }
.vertical { top: 6px; right: 4px; width: 12px; height: 62%; }
.horizontal { left: 6px; bottom: 4px; width: 1398px; height: 12px; }

.bottombar { display: flex; align-items: center; height: 49px; gap: 45px; padding: 3px 11px 0 10px; }
.pair { display: flex; gap: 23px; }
.narrow { gap: 19px; }
.spaced { margin-left: 26px; }
.transport { margin-left: auto; }
.transport svg { width: 34px; height: 34px; }
.power { margin-left: 3px; }
```
